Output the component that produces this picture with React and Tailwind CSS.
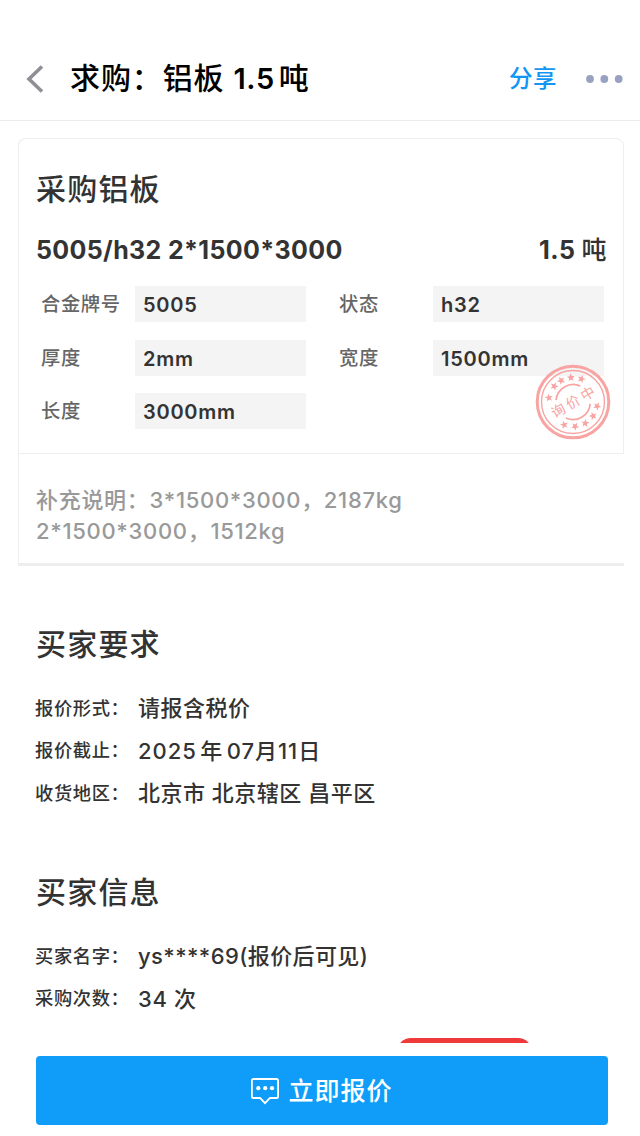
import React from 'react';

const specs = [
  { label: '合金牌号', value: '5005' },
  { label: '状态', value: 'h32' },
  { label: '厚度', value: '2mm' },
  { label: '宽度', value: '1500mm' },
  { label: '长度', value: '3000mm' },
];

const requirements = [
  { label: '报价形式：', value: '请报含税价' },
  { label: '报价截止：', value: '2025 年 07月11日', valueClass: 'tracking-[1px] [word-spacing:-3.5px]' },
  { label: '收货地区：', value: '北京市 北京辖区 昌平区' },
];

const buyerInfo = [
  { label: '买家名字：', value: 'ys****69(报价后可见)', valueClass: 'tracking-[0.4px]' },
  { label: '采购次数：', value: '34 次', valueClass: 'tracking-[0.6px]' },
];

const starPoints = '0,-4.3 1.1,-1.4 4.1,-1.3 1.7,0.6 2.5,3.5 0,1.8 -2.5,3.5 -1.7,0.6 -4.1,-1.3 -1.1,-1.4';
const starAngles = [-80, -50, -29, -5, 20, 100, 125, 150, 175, 201];

function Stamp() {
  return (
    <svg className="absolute right-[13px] top-[225.5px] h-[76px] w-[76px]" viewBox="-38 -38 76 76" fill="none">
      <g stroke="#f7a4a2">
        <circle r="35.8" strokeWidth="3" />
        <circle r="31.5" strokeWidth="1.4" />
        <path d="M-17,-1.8 A17.3,17.3 0 0 1 7.2,-16" strokeWidth="1.7" />
        <path d="M17.2,1.8 A17.3,17.3 0 0 1 -7.2,16" strokeWidth="1.7" />
      </g>
      <g fill="#f7a4a2">
        {starAngles.map((angle) => (
          <polygon key={angle} points={starPoints} transform={`rotate(${angle}) translate(0 -24.5)`} />
        ))}
        <text
          transform="rotate(-30)"
          textAnchor="middle"
          x="1.5"
          y="5.2"
          fontSize="14"
          letterSpacing="3"
        >
          询价中
        </text>
      </g>
    </svg>
  );
}

function InfoSection({ title, items, className }) {
  return (
    <section className={`pr-9 pl-[35px] ${className}`}>
      <h2 className="pl-px text-[30px] leading-[44px] font-medium tracking-[1.2px]">{title}</h2>
      <dl className="mt-[21px]">
        {items.map((item) => (
          <div key={item.label} className="flex h-[42.7px] items-center">
            <dt className="w-[103px] shrink-0 text-[18.3px] font-medium tracking-[0.6px]">{item.label}</dt>
            <dd className={`text-[22px] whitespace-nowrap font-medium ${item.valueClass ?? 'tracking-[0.5px]'}`}>
              {item.value}
            </dd>
          </div>
        ))}
      </dl>
    </section>
  );
}

export default function App() {
  return (
    <div className="relative flex h-[1136px] w-[640px] flex-col overflow-hidden bg-white font-['Inter','Noto_Sans_CJK_SC',sans-serif] text-[#333]">
      <header className="flex h-[121px] shrink-0 items-center border-b border-[#ededee] pt-[37px] pr-[17px] pl-[26px]">
        <svg className="h-7 w-[18px]" viewBox="0 0 18 28" fill="none" stroke="#8e9096" strokeWidth="3.6">
          <path d="M16 1.5 3 14l13 12.5" />
        </svg>
        <h1 className="ml-[26px] text-[30px] leading-[44px] font-medium tracking-[0.9px] whitespace-nowrap text-black">
          求购：铝板
          <span className="mr-1 ml-[9px] text-[29px] font-semibold tracking-[0.6px]">1.5</span>
          吨
        </h1>
        <a href="#share" className="ml-auto pt-px text-[23.5px] font-medium tracking-[0.5px] text-[#1296f3]">分享</a>
        <svg className="ml-7 h-2 w-[38px]" viewBox="0 0 38 8" fill="#98a2c0">
          <circle cx="5" cy="4" r="3.9" />
          <circle cx="19.3" cy="4" r="3.9" />
          <circle cx="33.7" cy="4" r="3.9" />
        </svg>
      </header>

      <main>
        <article className="relative mt-[17px] mr-4 ml-[18px] h-[428px] rounded-t-lg border-b-3 border-l border-[#eeeeef]">
          <div className="-ml-px h-[316px] rounded-t-lg border border-[#eeeeef] pt-7 pr-4 pl-[17px]">
            <h2 className="text-[30px] leading-[44px] font-medium tracking-[1.2px]">采购铝板</h2>
            <div className="mt-[17px] flex justify-between text-[25px] leading-[44px] font-bold">
              <span className="tracking-[0.35px]">5005/h32 2*1500*3000</span>
              <span className="tracking-[0.4px]">1.5 <span className="font-medium">吨</span></span>
            </div>
            <dl className="mt-[14px] grid grid-cols-[298px_265px] gap-y-[17.5px] pl-[5px]">
              {specs.map((spec) => (
                <div key={spec.label} className="flex h-9">
                  <dt className="w-[94px] shrink-0 text-[19.3px] leading-[36px] font-medium tracking-[0.6px] text-[#666]">
                    {spec.label}
                  </dt>
                  <dd className="w-[171px] shrink-0 bg-[#f4f4f4] pl-2 text-[20px] leading-[38px] font-semibold tracking-[0.75px]">
                    {spec.value}
                  </dd>
                </div>
              ))}
            </dl>
          </div>
          <p className="mt-[31px] pl-[17px] text-[22px] leading-[31px] font-medium tracking-[0.7px] text-[#999]">
            补充说明：3*1500*3000，2187kg
            <br />
            2*1500*3000，1512kg
          </p>
          <Stamp />
        </article>

        <InfoSection title="买家要求" items={requirements} className="mt-14" />
        <InfoSection title="买家信息" items={buyerInfo} className="mt-[55px]" />
      </main>

      {/* top edge of the tag that is scrolled under the bottom bar */}
      <div className="absolute top-[1038px] left-[397px] h-[5px] w-[135px] overflow-hidden">
        <div className="h-8 rounded-[14px] bg-[#ef3a3a]" />
      </div>

      <footer className="absolute inset-x-0 bottom-0 pr-8 pb-[11px] pl-9">
        <button className="flex h-[69px] w-full items-center justify-center rounded bg-[#109df9] text-[25px] font-medium tracking-[1px] text-white">
          <svg className="mr-[9px] h-7 w-7" viewBox="0 0 28 28" fill="none" stroke="currentColor" strokeWidth="1.8">
            <path d="M2.5 2h23q1.6 0 1.6 1.6v15.8q0 1.6-1.6 1.6H19l-5 5.2L9 21H2.5q-1.6 0-1.6-1.6V3.6Q.9 2 2.5 2Z" />
            <g fill="currentColor" stroke="none">
              <circle cx="7.3" cy="11.2" r="2.1" />
              <circle cx="14.2" cy="11.2" r="2.1" />
              <circle cx="21" cy="11.2" r="2.1" />
            </g>
          </svg>
          <span className="pt-0.5">立即报价</span>
        </button>
      </footer>
    </div>
  );
}
